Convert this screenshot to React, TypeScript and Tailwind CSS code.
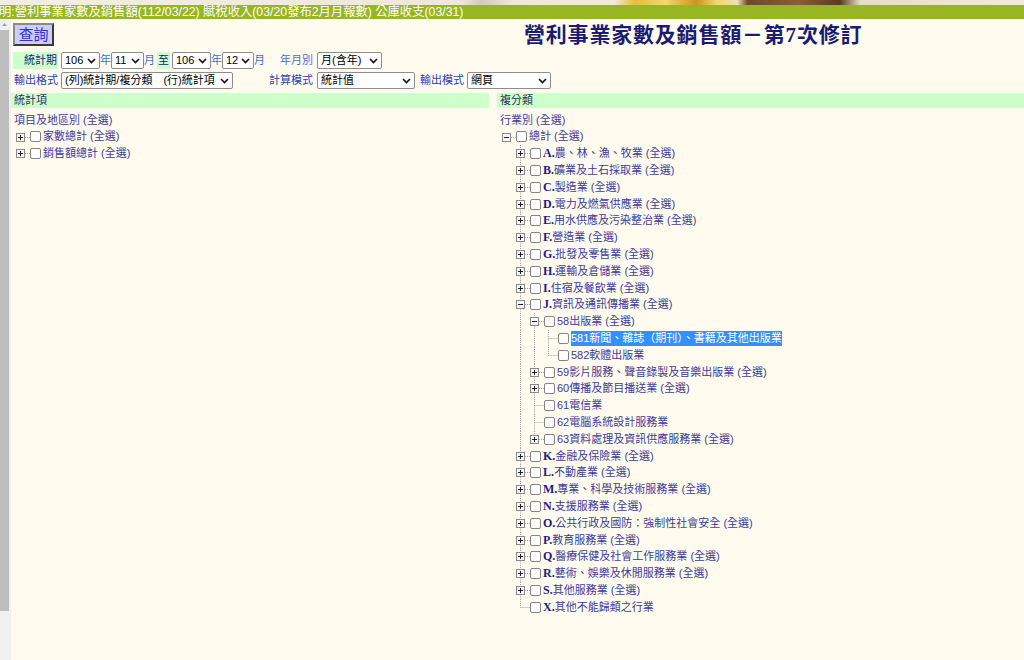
import React from 'react';

type Exp = '' | '+' | '-';
type Row = { level: number; exp: Exp; letter?: string; label: string; all?: boolean; hl?: boolean };

const R = (level: number, exp: Exp, letter: string, label: string, all = false, hl = false): Row => ({
  level,
  exp,
  letter,
  label,
  all,
  hl,
});

const rightRows: Row[] = [
  R(0, '-', '', '總計', true),
  R(1, '+', 'A.', '農、林、漁、牧業', true),
  R(1, '+', 'B.', '礦業及土石採取業', true),
  R(1, '+', 'C.', '製造業', true),
  R(1, '+', 'D.', '電力及燃氣供應業', true),
  R(1, '+', 'E.', '用水供應及污染整治業', true),
  R(1, '+', 'F.', '營造業', true),
  R(1, '+', 'G.', '批發及零售業', true),
  R(1, '+', 'H.', '運輸及倉儲業', true),
  R(1, '+', 'I.', '住宿及餐飲業', true),
  R(1, '-', 'J.', '資訊及通訊傳播業', true),
  R(2, '-', '', '58出版業', true),
  R(3, '', '', '581新聞、雜誌（期刊）、書籍及其他出版業', false, true),
  R(3, '', '', '582軟體出版業'),
  R(2, '+', '', '59影片服務、聲音錄製及音樂出版業', true),
  R(2, '+', '', '60傳播及節目播送業', true),
  R(2, '', '', '61電信業'),
  R(2, '', '', '62電腦系統設計服務業'),
  R(2, '+', '', '63資料處理及資訊供應服務業', true),
  R(1, '+', 'K.', '金融及保險業', true),
  R(1, '+', 'L.', '不動產業', true),
  R(1, '+', 'M.', '專業、科學及技術服務業', true),
  R(1, '+', 'N.', '支援服務業', true),
  R(1, '+', 'O.', '公共行政及國防：強制性社會安全', true),
  R(1, '+', 'P.', '教育服務業', true),
  R(1, '+', 'Q.', '醫療保健及社會工作服務業', true),
  R(1, '+', 'R.', '藝術、娛樂及休閒服務業', true),
  R(1, '+', 'S.', '其他服務業', true),
  R(1, '', 'X.', '其他不能歸類之行業'),
];

const leftRows: Row[] = [R(0, '+', '', '家數總計', true), R(0, '+', '', '銷售額總計', true)];

function hasNextSibling(rows: Row[], i: number, lvl: number) {
  for (let j = i + 1; j < rows.length; j++) {
    if (rows[j].level < lvl) return false;
    if (rows[j].level === lvl) return true;
  }
  return false;
}

const LINE = '#a3a3a3';
const H = 16.8;

function Guide({ on }: { on: boolean }) {
  return (
    <svg width={14} height={H} className="block shrink-0">
      {on && <line x1={4.5} y1={0} x2={4.5} y2={H} stroke={LINE} strokeDasharray="1 1" />}
    </svg>
  );
}

function Connector({ exp, top, bottom }: { exp: Exp; top: boolean; bottom: boolean }) {
  return (
    <svg width={14} height={H} className="block shrink-0">
      {top && <line x1={4.5} y1={0} x2={4.5} y2={8.5} stroke={LINE} strokeDasharray="1 1" />}
      {bottom && <line x1={4.5} y1={8.5} x2={4.5} y2={H} stroke={LINE} strokeDasharray="1 1" />}
      <line x1={exp ? 9 : 4.5} y1={8.5} x2={14} y2={8.5} stroke={LINE} strokeDasharray="1 1" />
      {exp && (
        <>
          <rect x={0.5} y={4.5} width={8} height={8} fill="#f6f6f6" stroke="#8a8a8a" />
          <line x1={2} y1={8.5} x2={7} y2={8.5} stroke="#222" />
          {exp === '+' && <line x1={4.5} y1={6} x2={4.5} y2={11} stroke="#222" />}
        </>
      )}
    </svg>
  );
}

function Check() {
  return <div className="w-[11px] h-[11px] shrink-0 border border-[#858585] rounded-[2px] bg-white" />;
}

function Tree({ rows, lines = true }: { rows: Row[]; lines?: boolean }) {
  return (
    <div className="flex flex-col pl-[5px]">
      {rows.map((r, i) => {
        const guides: boolean[] = [];
        for (let k = 0; k < r.level; k++) {
          let a = i - 1;
          while (a >= 0 && rows[a].level !== k) a--;
          guides.push(lines && a >= 0 && hasNextSibling(rows, a, k));
        }
        return (
          <div key={i} className="flex items-center h-[16.8px]">
            {guides.map((g, k) => (
              <Guide key={k} on={g} />
            ))}
            <Connector exp={r.exp} top={lines && r.level > 0} bottom={lines && hasNextSibling(rows, i, r.level)} />
            <Check />
            <span
              className={`ml-[2px] whitespace-nowrap text-[11px] leading-[15px] ${
                r.hl ? 'bg-[#3391ff] text-white' : 'text-[#3b3b9e]'
              }`}
            >
              {r.letter && (
                <b className="font-['Liberation_Serif',serif] text-[12px] text-[#1c1c88]">{r.letter}</b>
              )}
              {r.label}
              {r.all && ' (全選)'}
            </span>
          </div>
        );
      })}
    </div>
  );
}

function Chevron() {
  return (
    <svg width={9} height={6} className="block shrink-0">
      <path d="M1 1 L4.5 4.5 L8 1" fill="none" stroke="#111" strokeWidth={1.6} />
    </svg>
  );
}

function Sel({ className, text }: { className: string; text: string }) {
  return (
    <div
      className={`h-[17px] shrink-0 border border-[#8d8d8d] rounded-[2px] bg-white flex items-center justify-between pl-[3px] pr-[3px] text-[11px] leading-[15px] text-black whitespace-nowrap overflow-hidden ${className}`}
    >
      <span>{text}</span>
      <Chevron />
    </div>
  );
}

export default function App() {
  return (
    <div className="w-[1024px] h-[660px] overflow-hidden bg-[#fffbee] flex flex-col font-['Liberation_Sans','Noto_Sans_CJK_TC',sans-serif]">
      {/* banner strip */}
      <div className="h-[5px] shrink-0 bg-[linear-gradient(90deg,#f3eee0_0%,#eee8d8_45%,#cfcabd_47%,#eee8d8_50%,#f2ead6_60%,#e6bd3d_62%,#f3d76d_65%,#c8961f_68%,#f1d66c_70%,#eee0b6_72%,#6b4a2a_73%,#8d5c35_78%,#5a3a1f_82%,#e8dcc4_84%,#f2ebdb_100%)]" />
      {/* green news bar */}
      <div className="h-[14px] shrink-0 bg-[#98b523] overflow-hidden">
        <div className="-ml-[1px] whitespace-nowrap text-white text-[12.3px] leading-[14px]">
          明:營利事業家數及銷售額(112/03/22) 賦稅收入(03/20發布2月月報數) 公庫收支(03/31)
        </div>
      </div>

      <div className="flex flex-1 min-h-0">
        {/* left scrollbar */}
        <div className="w-[11px] shrink-0 bg-[#f0f0f0] flex flex-col">
          <div className="h-[11px] flex items-center justify-center pr-[2px]">
            <svg width={5} height={3} className="block">
              <path d="M0 3 L2.5 0 L5 3 Z" fill="#a3a3a3" />
            </svg>
          </div>
          <div className="w-[9px] h-[581px] bg-[#bdbdbd]" />
        </div>

        {/* main */}
        <div className="flex-1 flex flex-col">
          <div className="flex items-start pt-[4px] pl-[2px]">
            <button className="w-[41px] h-[23px] shrink-0 bg-[#ccccff] border-2 border-t-[#8a8a8a] border-l-[#8a8a8a] border-r-[#3a3a3a] border-b-[#3a3a3a] text-[#3333cc] text-[15px] leading-[19px]">
              查詢
            </button>
            <h1 className="ml-[470px] mt-[1px] whitespace-nowrap font-['Liberation_Serif','Noto_Sans_CJK_TC',serif] font-bold text-[21px] leading-[22px] tracking-[0.8px] text-[#1b1b73]">
              營利事業家數及銷售額－第7次修訂
            </h1>
          </div>

          {/* row 1 */}
          <div className="flex items-center h-[17px] mt-[6px] pl-[2px] text-[11px] leading-[17px] whitespace-nowrap">
            <div className="w-[45px] h-[17px] shrink-0 bg-[#ccffcc] text-right pr-[1px] text-[#1a1a80]">統計期</div>
            <Sel className="ml-[3px] w-[39px]" text="106" />
            <span className="w-[11px] text-center text-[#3d6fd9]">年</span>
            <Sel className="w-[33px]" text="11" />
            <span className="w-[11px] text-center text-[#3d6fd9]">月</span>
            <span className="ml-[2px] px-[1px] bg-[#ccffcc] text-[#1a1a80]">至</span>
            <Sel className="ml-[2px] w-[39px]" text="106" />
            <span className="w-[11px] text-center text-[#3d6fd9]">年</span>
            <Sel className="w-[32px]" text="12" />
            <span className="w-[11px] text-center text-[#3d6fd9]">月</span>
            <span className="ml-[15px] text-[#3d6fd9]">年月別</span>
            <Sel className="ml-[4px] w-[65px]" text="月(含年)" />
          </div>

          {/* row 2 */}
          <div className="flex items-center h-[17px] mt-[3px] pl-[3px] text-[11px] leading-[17px] whitespace-nowrap text-[#2b40b5]">
            <span className="w-[44px]">輸出格式</span>
            <Sel className="ml-[3px] w-[172px]" text="(列)統計期/複分類　(行)統計項" />
            <span className="ml-[36px] w-[44px]">計算模式</span>
            <Sel className="ml-[4px] w-[98px]" text="統計值" />
            <span className="ml-[5px] w-[44px]">輸出模式</span>
            <Sel className="ml-[3px] w-[84px]" text="網頁" />
          </div>

          {/* headers */}
          <div className="flex gap-[8px] mt-[4px] h-[15px] text-[11px] leading-[15px] text-[#303060]">
            <div className="w-[478px] shrink-0 bg-[#ccffcc] pl-[3px]">統計項</div>
            <div className="flex-1 bg-[#ccffcc] pl-[3px]">複分類</div>
          </div>

          {/* trees */}
          <div className="flex gap-[8px] pt-[4px]">
            <div className="w-[478px] shrink-0 flex flex-col">
              <div className="h-[16.5px] pl-[3px] text-[11px] leading-[16px] text-[#3b3b9e]">項目及地區別 (全選)</div>
              <Tree rows={leftRows} lines={false} />
            </div>
            <div className="flex-1 flex flex-col">
              <div className="h-[16.5px] pl-[3px] text-[11px] leading-[16px] text-[#3b3b9e]">行業別 (全選)</div>
              <Tree rows={rightRows} />
            </div>
          </div>
        </div>
      </div>
    </div>
  );
}
